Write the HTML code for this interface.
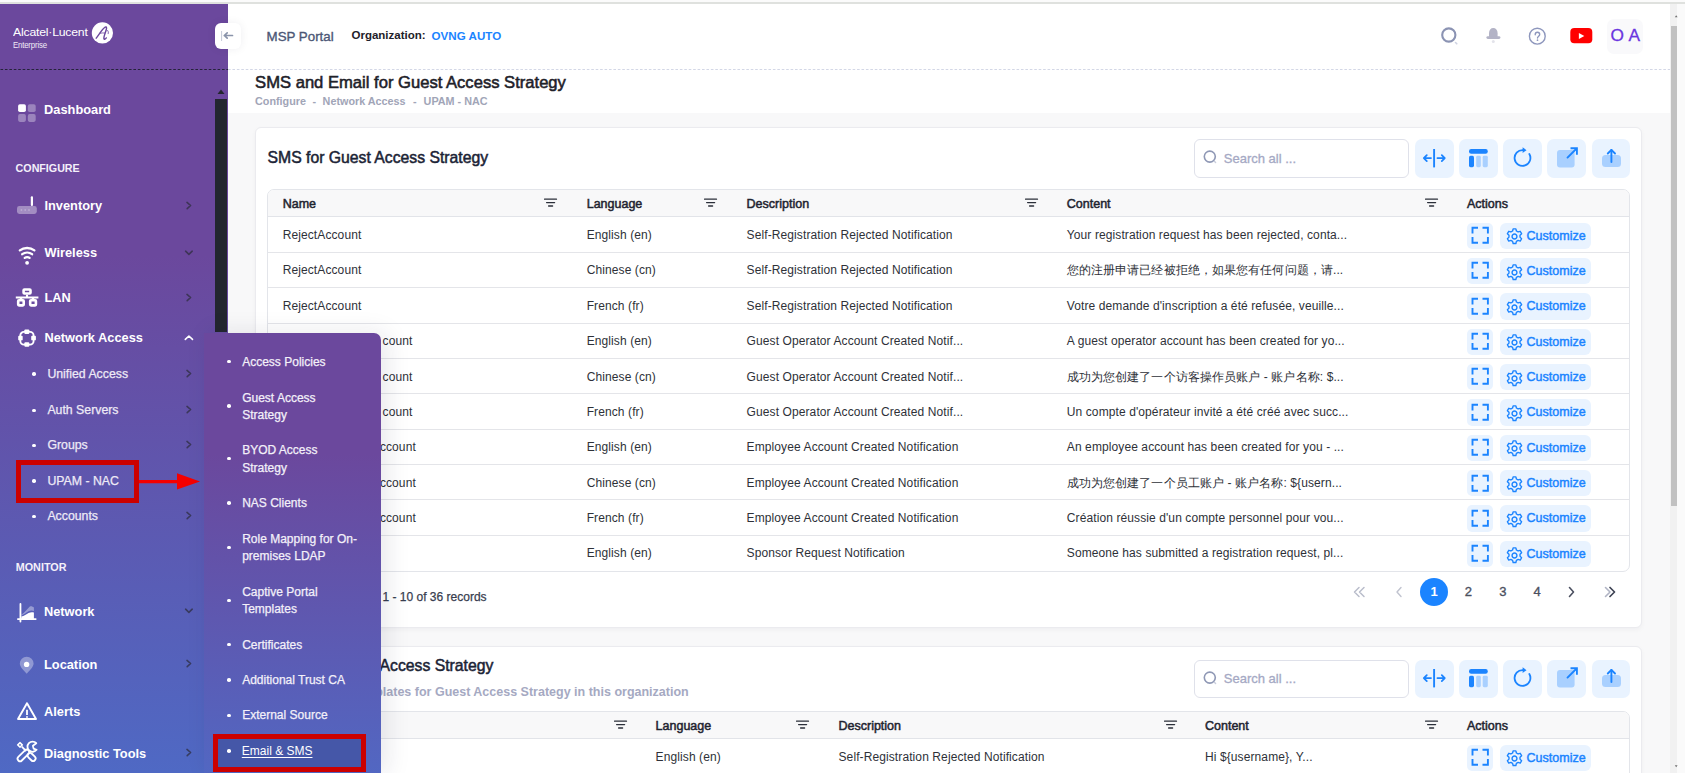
<!DOCTYPE html>
<html><head><meta charset="utf-8"><title>SMS and Email for Guest Access Strategy</title>
<style>
html,body{margin:0;padding:0;width:1685px;height:773px;overflow:hidden;background:#fafafa}
body{position:relative;font-family:"Liberation Sans", sans-serif}
.t{position:absolute;white-space:nowrap;line-height:1;font-family:"Liberation Sans", sans-serif}
.r{position:absolute;display:block}
</style></head><body>
<div class="r" style="left:0.0px;top:0.0px;width:1685.0px;height:773.0px;background:#fafafa"></div>
<div class="r" style="left:228.0px;top:3.0px;width:1442.0px;height:770.0px;background:#ffffff"></div>
<div class="r" style="left:228.0px;top:112.7px;width:1442.0px;height:660.3px;background:#f8f8f9"></div>
<svg class="r" style="left:228px;top:69px;" width="1442" height="1" viewBox="0 0 1442 1"><path d="M0 0.5H1442" stroke="#d3d7e6" stroke-width="1" stroke-dasharray="2.6 1.83"/></svg>
<div class="r" style="left:215.0px;top:23.0px;width:26.0px;height:26.0px;background:#fff;border-radius:6px;box-shadow:0 0 10px rgba(20,20,60,0.07);z-index:3"></div>
<svg class="r" style="left:215px;top:23px;z-index:4" width="26" height="26" viewBox="0 0 26 26"><path d="M6.6 8v10" stroke="#c5cad8" stroke-width="1"/><path d="M9.3 12.5h8.2M9.3 12.5l2.9-2.7M9.3 12.5l2.9 2.7" stroke="#8a94aa" stroke-width="1.7" fill="none" stroke-linecap="round" stroke-linejoin="round"/></svg>
<div class="t" style="left:266.6px;top:29.7px;font-size:13.3px;color:#4b5675;font-weight:400;-webkit-text-stroke:0.35px #4b5675">MSP Portal</div>
<div class="t" style="left:351.5px;top:30.1px;font-size:11.5px;color:#1e2129;font-weight:700;">Organization:</div>
<div class="t" style="left:431.6px;top:29.7px;font-size:11.6px;color:#1b84ff;font-weight:700;">OVNG AUTO</div>
<svg class="r" style="left:1438px;top:24px;" width="24" height="24" viewBox="0 0 24 24"><circle cx="10.8" cy="11" r="6.6" stroke="#8b93b3" stroke-width="2.1" fill="none"/><path d="M17.5 18.5l1.3 1.3" stroke="#cfd3e2" stroke-width="1.6" stroke-linecap="round"/></svg>
<svg class="r" style="left:1484px;top:24px;" width="20" height="22" viewBox="0 0 20 22"><path d="M5 14.9V9.2C5 6 6.8 4 9.3 4S13.6 6 13.6 9.2v5.7z" fill="#b3b3c6"/><rect x="2.4" y="12.2" width="14" height="2.8" rx="1.4" fill="#b3b3c6"/><circle cx="9.3" cy="17.5" r="1.5" fill="#e3e3ea"/></svg>
<svg class="r" style="left:1526px;top:25px;" width="23" height="23" viewBox="0 0 23 23"><circle cx="11.3" cy="11.2" r="7.9" stroke="#8e97bd" stroke-width="1.4" fill="none"/><path d="M9.2 9.7c0-1.4 1-2.4 2.2-2.4s2.3 0.9 2.3 2.2c0 1.7-2.2 1.7-2.2 3.5" stroke="#8e97bd" stroke-width="1.35" fill="none" stroke-linecap="round"/><circle cx="11.5" cy="15.2" r="0.85" fill="#8e97bd"/></svg>
<svg class="r" style="left:1570px;top:28px;" width="23" height="16" viewBox="0 0 23 16"><rect x="0.3" y="0" width="22" height="15.2" rx="4" fill="#ff0000"/><path d="M8.9 5v5.9l5.4-2.95z" fill="#fff"/></svg>
<div class="r" style="left:1607.0px;top:18.5px;width:36.0px;height:35.5px;background:#f9f9fb;border-radius:7px"></div>
<div class="t" style="left:1610.6px;top:26.5px;font-size:17.3px;color:#6a35e0;font-weight:400;letter-spacing:0.3px;-webkit-text-stroke:0.3px #6a35e0">O A</div>
<div class="r" style="left:1670.0px;top:3.0px;width:7.0px;height:770.0px;background:#f1f1f1"></div>
<div class="r" style="left:1671.0px;top:26.0px;width:6.0px;height:480.0px;background:#c1c1c1"></div>
<svg class="r" style="left:1674px;top:14px;" width="4" height="4" viewBox="0 0 4 4"><path d="M2.2 1.2L3.6 3.2H0.8z" fill="#707070"/></svg>
<svg class="r" style="left:1674px;top:764px;" width="4" height="4" viewBox="0 0 4 4"><path d="M2.2 3.2L3.6 1.2H0.8z" fill="#707070"/></svg>
<div class="r" style="left:0.0px;top:0.0px;width:1685.0px;height:2.0px;background:#fbfbfb"></div>
<div class="r" style="left:0.0px;top:2.0px;width:1685.0px;height:1.5px;background:#dfe1de"></div>
<div class="t" style="left:255.1px;top:74.8px;font-size:16.6px;color:#1e2129;font-weight:400;-webkit-text-stroke:0.55px #1e2129">SMS and Email for Guest Access Strategy</div>
<div class="t" style="left:255.0px;top:96.3px;font-size:10.8px;color:#a1a5b7;font-weight:700;">Configure</div>
<div class="t" style="left:312.5px;top:96.3px;font-size:10.8px;color:#a1a5b7;font-weight:700;">-</div>
<div class="t" style="left:322.6px;top:96.3px;font-size:10.8px;color:#a1a5b7;font-weight:700;">Network Access</div>
<div class="t" style="left:413.0px;top:96.3px;font-size:10.8px;color:#a1a5b7;font-weight:700;">-</div>
<div class="t" style="left:423.6px;top:96.3px;font-size:10.8px;color:#a1a5b7;font-weight:700;">UPAM - NAC</div>
<div class="r" style="left:255.3px;top:126.5px;width:1386.9px;height:501.8px;background:#fff;border:1px solid #ebebef;border-radius:6px;box-sizing:border-box;box-shadow:0 2px 5px rgba(30,30,60,0.04)"></div>
<div class="t" style="left:267.5px;top:149.5px;font-size:15.75px;color:#1b2335;font-weight:400;-webkit-text-stroke:0.5px #1b2335">SMS for Guest Access Strategy</div>
<div class="r" style="left:1194.3px;top:139.3px;width:215.0px;height:38.3px;background:#fff;border:1.2px solid #dfe1ea;border-radius:6px;box-sizing:border-box"></div>
<svg class="r" style="left:1201px;top:149.3px;" width="20" height="20" viewBox="0 0 20 20"><circle cx="8.8" cy="7.6" r="5.5" stroke="#8f98b5" stroke-width="1.6" fill="none"/><path d="M13.6 12.6l1 1" stroke="#c9cddc" stroke-width="1.4" stroke-linecap="round"/></svg>
<div class="t" style="left:1223.8px;top:151.8px;font-size:13px;color:#a5a9c4;font-weight:400;-webkit-text-stroke:0.3px #a5a9c4">Search all ...</div>
<div class="r" style="left:1415.0px;top:139.3px;width:38.6px;height:38.3px;background:#e9f3ff;border-radius:7px"></div>
<div class="r" style="left:1459.2px;top:139.3px;width:38.6px;height:38.3px;background:#e9f3ff;border-radius:7px"></div>
<div class="r" style="left:1503.3px;top:139.3px;width:38.6px;height:38.3px;background:#e9f3ff;border-radius:7px"></div>
<div class="r" style="left:1547.4px;top:139.3px;width:38.6px;height:38.3px;background:#e9f3ff;border-radius:7px"></div>
<div class="r" style="left:1591.6px;top:139.3px;width:38.6px;height:38.3px;background:#e9f3ff;border-radius:7px"></div>
<svg class="r" style="left:1415px;top:139px;" width="39" height="39" viewBox="0 0 39 39"><path d="M19.1 10v18.4" stroke="#1b84ff" stroke-width="1.9"/><path d="M8.8 19.1h7.2M8.8 19.1l3-3M8.8 19.1l3 3M22.4 19.1h7.4M29.8 19.1l-3-3M29.8 19.1l-3 3" stroke="#1b84ff" stroke-width="1.75" fill="none" stroke-linecap="round" stroke-linejoin="round"/></svg>
<svg class="r" style="left:1459px;top:139px;" width="39" height="39" viewBox="0 0 39 39"><rect x="10" y="10" width="18.8" height="4.7" rx="2.2" fill="#1b84ff"/><rect x="10" y="16.8" width="5" height="11.4" rx="1.6" fill="#1b84ff"/><rect x="17.2" y="16.8" width="4.6" height="11.4" rx="1.4" fill="#a9d0ff"/><rect x="23.7" y="16.8" width="5.1" height="11.4" rx="1.4" fill="#a9d0ff"/></svg>
<svg class="r" style="left:1503px;top:139px;" width="39" height="39" viewBox="0 0 39 39"><path d="M26.34 15.05A7.9 7.9 0 1 1 19.9 11.1" stroke="#1b84ff" stroke-width="1.8" fill="none" stroke-linecap="round"/><path d="M19.6 8.3l3.9 2.9-3.9 2.9z" fill="#1b84ff"/></svg>
<svg class="r" style="left:1547px;top:139px;" width="39" height="39" viewBox="0 0 39 39"><rect x="10" y="11" width="17.6" height="17.6" rx="3" fill="#a9d0ff"/><path d="M20.5 18.6l8.6-8.6" stroke="#1b84ff" stroke-width="1.9" stroke-linecap="round"/><path d="M23.5 9.3h6.4v6.4" stroke="#1b84ff" stroke-width="1.9" fill="none"/></svg>
<svg class="r" style="left:1591px;top:139px;" width="40" height="39" viewBox="0 0 40 39"><rect x="11" y="16" width="19" height="12" rx="3.5" fill="#a9d0ff"/><path d="M20.4 23V11" stroke="#1b84ff" stroke-width="1.9" stroke-linecap="round"/><path d="M16.8 14.5l3.6-3.6 3.6 3.6" stroke="#1b84ff" stroke-width="1.9" fill="none" stroke-linecap="round" stroke-linejoin="round"/></svg>
<div class="r" style="left:267.4px;top:189.3px;width:1362.6px;height:382.6px;background:#fff;border:1px solid #e3e5ea;border-radius:7px;box-sizing:border-box;overflow:hidden"></div>
<div class="r" style="left:268.4px;top:190.3px;width:1360.6px;height:26.7px;background:#f8f8f9;border-radius:6px 6px 0 0"></div>
<div class="r" style="left:267.4px;top:216.0px;width:1362.6px;height:1.0px;background:#e2e4e9"></div>
<div class="t" style="left:282.7px;top:197.6px;font-size:12.5px;color:#1f2430;font-weight:400;-webkit-text-stroke:0.5px #1f2430">Name</div>
<svg class="r" style="left:544px;top:198px;" width="14" height="10" viewBox="0 0 14 10"><path d="M0.5 1.2h12M2.6 4.6h8M4.6 8h4" stroke="#2b2f3a" stroke-width="1.3" stroke-linecap="round"/></svg>
<div class="t" style="left:586.7px;top:197.6px;font-size:12.5px;color:#1f2430;font-weight:400;-webkit-text-stroke:0.5px #1f2430">Language</div>
<svg class="r" style="left:704px;top:198px;" width="14" height="10" viewBox="0 0 14 10"><path d="M0.5 1.2h12M2.6 4.6h8M4.6 8h4" stroke="#2b2f3a" stroke-width="1.3" stroke-linecap="round"/></svg>
<div class="t" style="left:746.6px;top:197.6px;font-size:12.5px;color:#1f2430;font-weight:400;-webkit-text-stroke:0.5px #1f2430">Description</div>
<svg class="r" style="left:1025px;top:198px;" width="14" height="10" viewBox="0 0 14 10"><path d="M0.5 1.2h12M2.6 4.6h8M4.6 8h4" stroke="#2b2f3a" stroke-width="1.3" stroke-linecap="round"/></svg>
<div class="t" style="left:1066.8px;top:197.6px;font-size:12.5px;color:#1f2430;font-weight:400;-webkit-text-stroke:0.5px #1f2430">Content</div>
<svg class="r" style="left:1425px;top:198px;" width="14" height="10" viewBox="0 0 14 10"><path d="M0.5 1.2h12M2.6 4.6h8M4.6 8h4" stroke="#2b2f3a" stroke-width="1.3" stroke-linecap="round"/></svg>
<div class="t" style="left:1467.0px;top:197.6px;font-size:12.5px;color:#1f2430;font-weight:400;-webkit-text-stroke:0.5px #1f2430">Actions</div>
<div class="t" style="left:282.7px;top:229.1px;font-size:12px;color:#2e3138;font-weight:400;letter-spacing:0.1px">RejectAccount</div>
<div class="t" style="left:586.7px;top:229.1px;font-size:12px;color:#2e3138;font-weight:400;letter-spacing:0.1px">English (en)</div>
<div class="t" style="left:746.6px;top:229.1px;font-size:12px;color:#2e3138;font-weight:400;letter-spacing:0.1px">Self-Registration Rejected Notification</div>
<div class="t" style="left:1066.8px;top:229.1px;font-size:12px;color:#2e3138;font-weight:400;letter-spacing:0.1px">Your registration request has been rejected, conta...</div>
<div class="r" style="left:1467.0px;top:222.6px;width:26.2px;height:26.3px;background:#e9f3ff;border-radius:5px"></div>
<svg class="r" style="left:1467px;top:222px;" width="27" height="27" viewBox="0 0 27 27"><path d="M5.5 11.6V5.8H11M15.5 5.8H20.9V11.6M20.9 15.1V20.7H15.5M11 20.7H5.5V15.1" stroke="#1b84ff" stroke-width="1.9" fill="none"/></svg>
<div class="r" style="left:1500.0px;top:222.6px;width:91.3px;height:26.3px;background:#e9f3ff;border-radius:6px"></div>
<svg class="r" style="left:1505.5px;top:228.37500000000003px;" width="17" height="17" viewBox="0 0 17 17"><g transform="translate(8.5,8.5) scale(1.06)"><path d="M-1.3-7.2h2.6l.5 2 1.6.9 2-.6 1.3 2.2-1.5 1.5v1.8l1.5 1.5-1.3 2.2-2-.6-1.6.9-.5 2h-2.6l-.5-2-1.6-.9-2 .6-1.3-2.2 1.5-1.5v-1.8l-1.5-1.5 1.3-2.2 2 .6 1.6-.9z" stroke="#1b84ff" stroke-width="1.3" fill="none" stroke-linejoin="round"/><circle r="2.3" stroke="#1b84ff" stroke-width="1.3" fill="none"/></g></svg>
<div class="t" style="left:1526.6px;top:229.6px;font-size:12.5px;color:#1b84ff;font-weight:400;-webkit-text-stroke:0.45px #1b84ff">Customize</div>
<div class="r" style="left:268.4px;top:252.0px;width:1360.6px;height:1.0px;background:#e4e5e9"></div>
<div class="t" style="left:282.7px;top:264.4px;font-size:12px;color:#2e3138;font-weight:400;letter-spacing:0.1px">RejectAccount</div>
<div class="t" style="left:586.7px;top:264.4px;font-size:12px;color:#2e3138;font-weight:400;letter-spacing:0.1px">Chinese (cn)</div>
<div class="t" style="left:746.6px;top:264.4px;font-size:12px;color:#2e3138;font-weight:400;letter-spacing:0.1px">Self-Registration Rejected Notification</div>
<div class="t" style="left:1066.8px;top:264.4px;font-size:12px;color:#2e3138;font-weight:400;letter-spacing:0.1px">您的注册申请已经被拒绝，如果您有任何问题，请...</div>
<div class="r" style="left:1467.0px;top:257.9px;width:26.2px;height:26.3px;background:#e9f3ff;border-radius:5px"></div>
<svg class="r" style="left:1467px;top:257px;" width="27" height="27" viewBox="0 0 27 27"><path d="M5.5 11.6V5.8H11M15.5 5.8H20.9V11.6M20.9 15.1V20.7H15.5M11 20.7H5.5V15.1" stroke="#1b84ff" stroke-width="1.9" fill="none"/></svg>
<div class="r" style="left:1500.0px;top:257.9px;width:91.3px;height:26.3px;background:#e9f3ff;border-radius:6px"></div>
<svg class="r" style="left:1505.5px;top:263.72499999999997px;" width="17" height="17" viewBox="0 0 17 17"><g transform="translate(8.5,8.5) scale(1.06)"><path d="M-1.3-7.2h2.6l.5 2 1.6.9 2-.6 1.3 2.2-1.5 1.5v1.8l1.5 1.5-1.3 2.2-2-.6-1.6.9-.5 2h-2.6l-.5-2-1.6-.9-2 .6-1.3-2.2 1.5-1.5v-1.8l-1.5-1.5 1.3-2.2 2 .6 1.6-.9z" stroke="#1b84ff" stroke-width="1.3" fill="none" stroke-linejoin="round"/><circle r="2.3" stroke="#1b84ff" stroke-width="1.3" fill="none"/></g></svg>
<div class="t" style="left:1526.6px;top:264.9px;font-size:12.5px;color:#1b84ff;font-weight:400;-webkit-text-stroke:0.45px #1b84ff">Customize</div>
<div class="r" style="left:268.4px;top:287.0px;width:1360.6px;height:1.0px;background:#e4e5e9"></div>
<div class="t" style="left:282.7px;top:299.8px;font-size:12px;color:#2e3138;font-weight:400;letter-spacing:0.1px">RejectAccount</div>
<div class="t" style="left:586.7px;top:299.8px;font-size:12px;color:#2e3138;font-weight:400;letter-spacing:0.1px">French (fr)</div>
<div class="t" style="left:746.6px;top:299.8px;font-size:12px;color:#2e3138;font-weight:400;letter-spacing:0.1px">Self-Registration Rejected Notification</div>
<div class="t" style="left:1066.8px;top:299.8px;font-size:12px;color:#2e3138;font-weight:400;letter-spacing:0.1px">Votre demande d&#x27;inscription a été refusée, veuille...</div>
<div class="r" style="left:1467.0px;top:293.3px;width:26.2px;height:26.3px;background:#e9f3ff;border-radius:5px"></div>
<svg class="r" style="left:1467px;top:293px;" width="27" height="27" viewBox="0 0 27 27"><path d="M5.5 11.6V5.8H11M15.5 5.8H20.9V11.6M20.9 15.1V20.7H15.5M11 20.7H5.5V15.1" stroke="#1b84ff" stroke-width="1.9" fill="none"/></svg>
<div class="r" style="left:1500.0px;top:293.3px;width:91.3px;height:26.3px;background:#e9f3ff;border-radius:6px"></div>
<svg class="r" style="left:1505.5px;top:299.075px;" width="17" height="17" viewBox="0 0 17 17"><g transform="translate(8.5,8.5) scale(1.06)"><path d="M-1.3-7.2h2.6l.5 2 1.6.9 2-.6 1.3 2.2-1.5 1.5v1.8l1.5 1.5-1.3 2.2-2-.6-1.6.9-.5 2h-2.6l-.5-2-1.6-.9-2 .6-1.3-2.2 1.5-1.5v-1.8l-1.5-1.5 1.3-2.2 2 .6 1.6-.9z" stroke="#1b84ff" stroke-width="1.3" fill="none" stroke-linejoin="round"/><circle r="2.3" stroke="#1b84ff" stroke-width="1.3" fill="none"/></g></svg>
<div class="t" style="left:1526.6px;top:300.2px;font-size:12.5px;color:#1b84ff;font-weight:400;-webkit-text-stroke:0.45px #1b84ff">Customize</div>
<div class="r" style="left:268.4px;top:323.0px;width:1360.6px;height:1.0px;background:#e4e5e9"></div>
<div class="t" style="left:382.6px;top:335.2px;font-size:12px;color:#2e3138;font-weight:400;letter-spacing:0.1px">count</div>
<div class="t" style="left:586.7px;top:335.2px;font-size:12px;color:#2e3138;font-weight:400;letter-spacing:0.1px">English (en)</div>
<div class="t" style="left:746.6px;top:335.2px;font-size:12px;color:#2e3138;font-weight:400;letter-spacing:0.1px">Guest Operator Account Created Notif...</div>
<div class="t" style="left:1066.8px;top:335.2px;font-size:12px;color:#2e3138;font-weight:400;letter-spacing:0.1px">A guest operator account has been created for yo...</div>
<div class="r" style="left:1467.0px;top:328.6px;width:26.2px;height:26.3px;background:#e9f3ff;border-radius:5px"></div>
<svg class="r" style="left:1467px;top:328px;" width="27" height="27" viewBox="0 0 27 27"><path d="M5.5 11.6V5.8H11M15.5 5.8H20.9V11.6M20.9 15.1V20.7H15.5M11 20.7H5.5V15.1" stroke="#1b84ff" stroke-width="1.9" fill="none"/></svg>
<div class="r" style="left:1500.0px;top:328.6px;width:91.3px;height:26.3px;background:#e9f3ff;border-radius:6px"></div>
<svg class="r" style="left:1505.5px;top:334.425px;" width="17" height="17" viewBox="0 0 17 17"><g transform="translate(8.5,8.5) scale(1.06)"><path d="M-1.3-7.2h2.6l.5 2 1.6.9 2-.6 1.3 2.2-1.5 1.5v1.8l1.5 1.5-1.3 2.2-2-.6-1.6.9-.5 2h-2.6l-.5-2-1.6-.9-2 .6-1.3-2.2 1.5-1.5v-1.8l-1.5-1.5 1.3-2.2 2 .6 1.6-.9z" stroke="#1b84ff" stroke-width="1.3" fill="none" stroke-linejoin="round"/><circle r="2.3" stroke="#1b84ff" stroke-width="1.3" fill="none"/></g></svg>
<div class="t" style="left:1526.6px;top:335.6px;font-size:12.5px;color:#1b84ff;font-weight:400;-webkit-text-stroke:0.45px #1b84ff">Customize</div>
<div class="r" style="left:268.4px;top:358.0px;width:1360.6px;height:1.0px;background:#e4e5e9"></div>
<div class="t" style="left:382.6px;top:370.5px;font-size:12px;color:#2e3138;font-weight:400;letter-spacing:0.1px">count</div>
<div class="t" style="left:586.7px;top:370.5px;font-size:12px;color:#2e3138;font-weight:400;letter-spacing:0.1px">Chinese (cn)</div>
<div class="t" style="left:746.6px;top:370.5px;font-size:12px;color:#2e3138;font-weight:400;letter-spacing:0.1px">Guest Operator Account Created Notif...</div>
<div class="t" style="left:1066.8px;top:370.5px;font-size:12px;color:#2e3138;font-weight:400;letter-spacing:0.1px">成功为您创建了一个访客操作员账户 - 账户名称: $...</div>
<div class="r" style="left:1467.0px;top:364.0px;width:26.2px;height:26.3px;background:#e9f3ff;border-radius:5px"></div>
<svg class="r" style="left:1467px;top:363px;" width="27" height="27" viewBox="0 0 27 27"><path d="M5.5 11.6V5.8H11M15.5 5.8H20.9V11.6M20.9 15.1V20.7H15.5M11 20.7H5.5V15.1" stroke="#1b84ff" stroke-width="1.9" fill="none"/></svg>
<div class="r" style="left:1500.0px;top:364.0px;width:91.3px;height:26.3px;background:#e9f3ff;border-radius:6px"></div>
<svg class="r" style="left:1505.5px;top:369.775px;" width="17" height="17" viewBox="0 0 17 17"><g transform="translate(8.5,8.5) scale(1.06)"><path d="M-1.3-7.2h2.6l.5 2 1.6.9 2-.6 1.3 2.2-1.5 1.5v1.8l1.5 1.5-1.3 2.2-2-.6-1.6.9-.5 2h-2.6l-.5-2-1.6-.9-2 .6-1.3-2.2 1.5-1.5v-1.8l-1.5-1.5 1.3-2.2 2 .6 1.6-.9z" stroke="#1b84ff" stroke-width="1.3" fill="none" stroke-linejoin="round"/><circle r="2.3" stroke="#1b84ff" stroke-width="1.3" fill="none"/></g></svg>
<div class="t" style="left:1526.6px;top:370.9px;font-size:12.5px;color:#1b84ff;font-weight:400;-webkit-text-stroke:0.45px #1b84ff">Customize</div>
<div class="r" style="left:268.4px;top:393.0px;width:1360.6px;height:1.0px;background:#e4e5e9"></div>
<div class="t" style="left:382.6px;top:405.9px;font-size:12px;color:#2e3138;font-weight:400;letter-spacing:0.1px">count</div>
<div class="t" style="left:586.7px;top:405.9px;font-size:12px;color:#2e3138;font-weight:400;letter-spacing:0.1px">French (fr)</div>
<div class="t" style="left:746.6px;top:405.9px;font-size:12px;color:#2e3138;font-weight:400;letter-spacing:0.1px">Guest Operator Account Created Notif...</div>
<div class="t" style="left:1066.8px;top:405.9px;font-size:12px;color:#2e3138;font-weight:400;letter-spacing:0.1px">Un compte d&#x27;opérateur invité a été créé avec succ...</div>
<div class="r" style="left:1467.0px;top:399.3px;width:26.2px;height:26.3px;background:#e9f3ff;border-radius:5px"></div>
<svg class="r" style="left:1467px;top:399px;" width="27" height="27" viewBox="0 0 27 27"><path d="M5.5 11.6V5.8H11M15.5 5.8H20.9V11.6M20.9 15.1V20.7H15.5M11 20.7H5.5V15.1" stroke="#1b84ff" stroke-width="1.9" fill="none"/></svg>
<div class="r" style="left:1500.0px;top:399.3px;width:91.3px;height:26.3px;background:#e9f3ff;border-radius:6px"></div>
<svg class="r" style="left:1505.5px;top:405.125px;" width="17" height="17" viewBox="0 0 17 17"><g transform="translate(8.5,8.5) scale(1.06)"><path d="M-1.3-7.2h2.6l.5 2 1.6.9 2-.6 1.3 2.2-1.5 1.5v1.8l1.5 1.5-1.3 2.2-2-.6-1.6.9-.5 2h-2.6l-.5-2-1.6-.9-2 .6-1.3-2.2 1.5-1.5v-1.8l-1.5-1.5 1.3-2.2 2 .6 1.6-.9z" stroke="#1b84ff" stroke-width="1.3" fill="none" stroke-linejoin="round"/><circle r="2.3" stroke="#1b84ff" stroke-width="1.3" fill="none"/></g></svg>
<div class="t" style="left:1526.6px;top:406.3px;font-size:12.5px;color:#1b84ff;font-weight:400;-webkit-text-stroke:0.45px #1b84ff">Customize</div>
<div class="r" style="left:268.4px;top:429.0px;width:1360.6px;height:1.0px;background:#e4e5e9"></div>
<div class="t" style="left:379.9px;top:441.2px;font-size:12px;color:#2e3138;font-weight:400;letter-spacing:0.1px">ccount</div>
<div class="t" style="left:586.7px;top:441.2px;font-size:12px;color:#2e3138;font-weight:400;letter-spacing:0.1px">English (en)</div>
<div class="t" style="left:746.6px;top:441.2px;font-size:12px;color:#2e3138;font-weight:400;letter-spacing:0.1px">Employee Account Created Notification</div>
<div class="t" style="left:1066.8px;top:441.2px;font-size:12px;color:#2e3138;font-weight:400;letter-spacing:0.1px">An employee account has been created for you - ...</div>
<div class="r" style="left:1467.0px;top:434.7px;width:26.2px;height:26.3px;background:#e9f3ff;border-radius:5px"></div>
<svg class="r" style="left:1467px;top:434px;" width="27" height="27" viewBox="0 0 27 27"><path d="M5.5 11.6V5.8H11M15.5 5.8H20.9V11.6M20.9 15.1V20.7H15.5M11 20.7H5.5V15.1" stroke="#1b84ff" stroke-width="1.9" fill="none"/></svg>
<div class="r" style="left:1500.0px;top:434.7px;width:91.3px;height:26.3px;background:#e9f3ff;border-radius:6px"></div>
<svg class="r" style="left:1505.5px;top:440.475px;" width="17" height="17" viewBox="0 0 17 17"><g transform="translate(8.5,8.5) scale(1.06)"><path d="M-1.3-7.2h2.6l.5 2 1.6.9 2-.6 1.3 2.2-1.5 1.5v1.8l1.5 1.5-1.3 2.2-2-.6-1.6.9-.5 2h-2.6l-.5-2-1.6-.9-2 .6-1.3-2.2 1.5-1.5v-1.8l-1.5-1.5 1.3-2.2 2 .6 1.6-.9z" stroke="#1b84ff" stroke-width="1.3" fill="none" stroke-linejoin="round"/><circle r="2.3" stroke="#1b84ff" stroke-width="1.3" fill="none"/></g></svg>
<div class="t" style="left:1526.6px;top:441.7px;font-size:12.5px;color:#1b84ff;font-weight:400;-webkit-text-stroke:0.45px #1b84ff">Customize</div>
<div class="r" style="left:268.4px;top:464.0px;width:1360.6px;height:1.0px;background:#e4e5e9"></div>
<div class="t" style="left:379.9px;top:476.6px;font-size:12px;color:#2e3138;font-weight:400;letter-spacing:0.1px">ccount</div>
<div class="t" style="left:586.7px;top:476.6px;font-size:12px;color:#2e3138;font-weight:400;letter-spacing:0.1px">Chinese (cn)</div>
<div class="t" style="left:746.6px;top:476.6px;font-size:12px;color:#2e3138;font-weight:400;letter-spacing:0.1px">Employee Account Created Notification</div>
<div class="t" style="left:1066.8px;top:476.6px;font-size:12px;color:#2e3138;font-weight:400;letter-spacing:0.1px">成功为您创建了一个员工账户 - 账户名称: ${usern...</div>
<div class="r" style="left:1467.0px;top:470.0px;width:26.2px;height:26.3px;background:#e9f3ff;border-radius:5px"></div>
<svg class="r" style="left:1467px;top:470px;" width="27" height="27" viewBox="0 0 27 27"><path d="M5.5 11.6V5.8H11M15.5 5.8H20.9V11.6M20.9 15.1V20.7H15.5M11 20.7H5.5V15.1" stroke="#1b84ff" stroke-width="1.9" fill="none"/></svg>
<div class="r" style="left:1500.0px;top:470.0px;width:91.3px;height:26.3px;background:#e9f3ff;border-radius:6px"></div>
<svg class="r" style="left:1505.5px;top:475.82500000000005px;" width="17" height="17" viewBox="0 0 17 17"><g transform="translate(8.5,8.5) scale(1.06)"><path d="M-1.3-7.2h2.6l.5 2 1.6.9 2-.6 1.3 2.2-1.5 1.5v1.8l1.5 1.5-1.3 2.2-2-.6-1.6.9-.5 2h-2.6l-.5-2-1.6-.9-2 .6-1.3-2.2 1.5-1.5v-1.8l-1.5-1.5 1.3-2.2 2 .6 1.6-.9z" stroke="#1b84ff" stroke-width="1.3" fill="none" stroke-linejoin="round"/><circle r="2.3" stroke="#1b84ff" stroke-width="1.3" fill="none"/></g></svg>
<div class="t" style="left:1526.6px;top:477.0px;font-size:12.5px;color:#1b84ff;font-weight:400;-webkit-text-stroke:0.45px #1b84ff">Customize</div>
<div class="r" style="left:268.4px;top:499.0px;width:1360.6px;height:1.0px;background:#e4e5e9"></div>
<div class="t" style="left:379.9px;top:511.9px;font-size:12px;color:#2e3138;font-weight:400;letter-spacing:0.1px">ccount</div>
<div class="t" style="left:586.7px;top:511.9px;font-size:12px;color:#2e3138;font-weight:400;letter-spacing:0.1px">French (fr)</div>
<div class="t" style="left:746.6px;top:511.9px;font-size:12px;color:#2e3138;font-weight:400;letter-spacing:0.1px">Employee Account Created Notification</div>
<div class="t" style="left:1066.8px;top:511.9px;font-size:12px;color:#2e3138;font-weight:400;letter-spacing:0.1px">Création réussie d&#x27;un compte personnel pour vou...</div>
<div class="r" style="left:1467.0px;top:505.4px;width:26.2px;height:26.3px;background:#e9f3ff;border-radius:5px"></div>
<svg class="r" style="left:1467px;top:505px;" width="27" height="27" viewBox="0 0 27 27"><path d="M5.5 11.6V5.8H11M15.5 5.8H20.9V11.6M20.9 15.1V20.7H15.5M11 20.7H5.5V15.1" stroke="#1b84ff" stroke-width="1.9" fill="none"/></svg>
<div class="r" style="left:1500.0px;top:505.4px;width:91.3px;height:26.3px;background:#e9f3ff;border-radius:6px"></div>
<svg class="r" style="left:1505.5px;top:511.175px;" width="17" height="17" viewBox="0 0 17 17"><g transform="translate(8.5,8.5) scale(1.06)"><path d="M-1.3-7.2h2.6l.5 2 1.6.9 2-.6 1.3 2.2-1.5 1.5v1.8l1.5 1.5-1.3 2.2-2-.6-1.6.9-.5 2h-2.6l-.5-2-1.6-.9-2 .6-1.3-2.2 1.5-1.5v-1.8l-1.5-1.5 1.3-2.2 2 .6 1.6-.9z" stroke="#1b84ff" stroke-width="1.3" fill="none" stroke-linejoin="round"/><circle r="2.3" stroke="#1b84ff" stroke-width="1.3" fill="none"/></g></svg>
<div class="t" style="left:1526.6px;top:512.4px;font-size:12.5px;color:#1b84ff;font-weight:400;-webkit-text-stroke:0.45px #1b84ff">Customize</div>
<div class="r" style="left:268.4px;top:535.0px;width:1360.6px;height:1.0px;background:#e4e5e9"></div>
<div class="t" style="left:282.7px;top:547.2px;font-size:12px;color:#2e3138;font-weight:400;letter-spacing:0.1px">SponsorRequest</div>
<div class="t" style="left:586.7px;top:547.2px;font-size:12px;color:#2e3138;font-weight:400;letter-spacing:0.1px">English (en)</div>
<div class="t" style="left:746.6px;top:547.2px;font-size:12px;color:#2e3138;font-weight:400;letter-spacing:0.1px">Sponsor Request Notification</div>
<div class="t" style="left:1066.8px;top:547.2px;font-size:12px;color:#2e3138;font-weight:400;letter-spacing:0.1px">Someone has submitted a registration request, pl...</div>
<div class="r" style="left:1467.0px;top:540.7px;width:26.2px;height:26.3px;background:#e9f3ff;border-radius:5px"></div>
<svg class="r" style="left:1467px;top:540px;" width="27" height="27" viewBox="0 0 27 27"><path d="M5.5 11.6V5.8H11M15.5 5.8H20.9V11.6M20.9 15.1V20.7H15.5M11 20.7H5.5V15.1" stroke="#1b84ff" stroke-width="1.9" fill="none"/></svg>
<div class="r" style="left:1500.0px;top:540.7px;width:91.3px;height:26.3px;background:#e9f3ff;border-radius:6px"></div>
<svg class="r" style="left:1505.5px;top:546.525px;" width="17" height="17" viewBox="0 0 17 17"><g transform="translate(8.5,8.5) scale(1.06)"><path d="M-1.3-7.2h2.6l.5 2 1.6.9 2-.6 1.3 2.2-1.5 1.5v1.8l1.5 1.5-1.3 2.2-2-.6-1.6.9-.5 2h-2.6l-.5-2-1.6-.9-2 .6-1.3-2.2 1.5-1.5v-1.8l-1.5-1.5 1.3-2.2 2 .6 1.6-.9z" stroke="#1b84ff" stroke-width="1.3" fill="none" stroke-linejoin="round"/><circle r="2.3" stroke="#1b84ff" stroke-width="1.3" fill="none"/></g></svg>
<div class="t" style="left:1526.6px;top:547.7px;font-size:12.5px;color:#1b84ff;font-weight:400;-webkit-text-stroke:0.45px #1b84ff">Customize</div>
<div class="t" style="left:382.5px;top:590.5px;font-size:12px;color:#383d4f;font-weight:400;-webkit-text-stroke:0.25px #383d4f">1 - 10 of 36 records</div>
<div class="r" style="left:1420px;top:578px;width:28.2px;height:28.2px;border-radius:50%;background:#1b84ff"></div>
<div class="t" style="left:1430.4px;top:585.2px;font-size:13px;color:#ffffff;font-weight:700;">1</div>
<div class="t" style="left:1464.8px;top:585.2px;font-size:13px;color:#4b5060;font-weight:400;-webkit-text-stroke:0.35px #4b5060">2</div>
<div class="t" style="left:1499.2px;top:585.2px;font-size:13px;color:#4b5060;font-weight:400;-webkit-text-stroke:0.35px #4b5060">3</div>
<div class="t" style="left:1533.6px;top:585.2px;font-size:13px;color:#4b5060;font-weight:400;-webkit-text-stroke:0.35px #4b5060">4</div>
<svg class="r" style="left:1350px;top:584px;" width="20" height="16" viewBox="0 0 20 16"><path d="M9 3.5L4.5 8 9 12.5M14 3.5L9.5 8 14 12.5" stroke="#b9bdcb" stroke-width="1.5" fill="none" stroke-linecap="round" stroke-linejoin="round"/></svg>
<svg class="r" style="left:1392px;top:584px;" width="14" height="16" viewBox="0 0 14 16"><path d="M9 3.5L5 8 9 12.5" stroke="#c0c3cf" stroke-width="1.4" fill="none" stroke-linecap="round" stroke-linejoin="round"/></svg>
<svg class="r" style="left:1565px;top:584px;" width="14" height="16" viewBox="0 0 14 16"><path d="M4.5 3.5L8.5 8 4.5 12.5" stroke="#4b5060" stroke-width="1.6" fill="none" stroke-linecap="round" stroke-linejoin="round"/></svg>
<svg class="r" style="left:1600px;top:584px;" width="20" height="16" viewBox="0 0 20 16"><path d="M5.5 3.5L10 8 5.5 12.5" stroke="#b0b4c4" stroke-width="1.6" fill="none" stroke-linecap="round" stroke-linejoin="round"/><path d="M10 3.5L14.5 8 10 12.5" stroke="#3e4354" stroke-width="1.7" fill="none" stroke-linecap="round" stroke-linejoin="round"/></svg>
<div class="r" style="left:255.3px;top:646.4px;width:1386.9px;height:153.6px;background:#fff;border:1px solid #ebebef;border-radius:6px;box-sizing:border-box;box-shadow:0 2px 5px rgba(30,30,60,0.04)"></div>
<div class="t" style="left:267.5px;top:658.3px;font-size:15.75px;color:#1b2335;font-weight:400;-webkit-text-stroke:0.5px #1b2335">Email for Guest Access Strategy</div>
<div class="t" style="left:267.5px;top:686.3px;font-size:12.5px;color:#a5a9c2;font-weight:700;">Manage email templates for Guest Access Strategy in this organization</div>
<div class="r" style="left:1194.3px;top:659.6px;width:215.0px;height:38.3px;background:#fff;border:1.2px solid #dfe1ea;border-radius:6px;box-sizing:border-box"></div>
<svg class="r" style="left:1201px;top:669.6px;" width="20" height="20" viewBox="0 0 20 20"><circle cx="8.8" cy="7.6" r="5.5" stroke="#8f98b5" stroke-width="1.6" fill="none"/><path d="M13.6 12.6l1 1" stroke="#c9cddc" stroke-width="1.4" stroke-linecap="round"/></svg>
<div class="t" style="left:1223.8px;top:672.1px;font-size:13px;color:#a5a9c4;font-weight:400;-webkit-text-stroke:0.3px #a5a9c4">Search all ...</div>
<div class="r" style="left:1415.0px;top:659.6px;width:38.6px;height:38.3px;background:#e9f3ff;border-radius:7px"></div>
<div class="r" style="left:1459.2px;top:659.6px;width:38.6px;height:38.3px;background:#e9f3ff;border-radius:7px"></div>
<div class="r" style="left:1503.3px;top:659.6px;width:38.6px;height:38.3px;background:#e9f3ff;border-radius:7px"></div>
<div class="r" style="left:1547.4px;top:659.6px;width:38.6px;height:38.3px;background:#e9f3ff;border-radius:7px"></div>
<div class="r" style="left:1591.6px;top:659.6px;width:38.6px;height:38.3px;background:#e9f3ff;border-radius:7px"></div>
<svg class="r" style="left:1415px;top:659px;" width="39" height="39" viewBox="0 0 39 39"><path d="M19.1 10v18.4" stroke="#1b84ff" stroke-width="1.9"/><path d="M8.8 19.1h7.2M8.8 19.1l3-3M8.8 19.1l3 3M22.4 19.1h7.4M29.8 19.1l-3-3M29.8 19.1l-3 3" stroke="#1b84ff" stroke-width="1.75" fill="none" stroke-linecap="round" stroke-linejoin="round"/></svg>
<svg class="r" style="left:1459px;top:659px;" width="39" height="39" viewBox="0 0 39 39"><rect x="10" y="10" width="18.8" height="4.7" rx="2.2" fill="#1b84ff"/><rect x="10" y="16.8" width="5" height="11.4" rx="1.6" fill="#1b84ff"/><rect x="17.2" y="16.8" width="4.6" height="11.4" rx="1.4" fill="#a9d0ff"/><rect x="23.7" y="16.8" width="5.1" height="11.4" rx="1.4" fill="#a9d0ff"/></svg>
<svg class="r" style="left:1503px;top:659px;" width="39" height="39" viewBox="0 0 39 39"><path d="M26.34 15.05A7.9 7.9 0 1 1 19.9 11.1" stroke="#1b84ff" stroke-width="1.8" fill="none" stroke-linecap="round"/><path d="M19.6 8.3l3.9 2.9-3.9 2.9z" fill="#1b84ff"/></svg>
<svg class="r" style="left:1547px;top:659px;" width="39" height="39" viewBox="0 0 39 39"><rect x="10" y="11" width="17.6" height="17.6" rx="3" fill="#a9d0ff"/><path d="M20.5 18.6l8.6-8.6" stroke="#1b84ff" stroke-width="1.9" stroke-linecap="round"/><path d="M23.5 9.3h6.4v6.4" stroke="#1b84ff" stroke-width="1.9" fill="none"/></svg>
<svg class="r" style="left:1591px;top:659px;" width="40" height="39" viewBox="0 0 40 39"><rect x="11" y="16" width="19" height="12" rx="3.5" fill="#a9d0ff"/><path d="M20.4 23V11" stroke="#1b84ff" stroke-width="1.9" stroke-linecap="round"/><path d="M16.8 14.5l3.6-3.6 3.6 3.6" stroke="#1b84ff" stroke-width="1.9" fill="none" stroke-linecap="round" stroke-linejoin="round"/></svg>
<div class="r" style="left:267.4px;top:711.3px;width:1362.6px;height:108.7px;background:#fff;border:1px solid #e3e5ea;border-radius:7px;box-sizing:border-box;overflow:hidden"></div>
<div class="r" style="left:268.4px;top:712.3px;width:1360.6px;height:26.7px;background:#f8f8f9;border-radius:6px 6px 0 0"></div>
<div class="r" style="left:267.4px;top:738.0px;width:1362.6px;height:1.0px;background:#e2e4e9"></div>
<div class="t" style="left:282.7px;top:719.6px;font-size:12.5px;color:#1f2430;font-weight:400;-webkit-text-stroke:0.5px #1f2430">Name</div>
<svg class="r" style="left:614px;top:720px;" width="14" height="10" viewBox="0 0 14 10"><path d="M0.5 1.2h12M2.6 4.6h8M4.6 8h4" stroke="#2b2f3a" stroke-width="1.3" stroke-linecap="round"/></svg>
<div class="t" style="left:655.6px;top:719.6px;font-size:12.5px;color:#1f2430;font-weight:400;-webkit-text-stroke:0.5px #1f2430">Language</div>
<svg class="r" style="left:796px;top:720px;" width="14" height="10" viewBox="0 0 14 10"><path d="M0.5 1.2h12M2.6 4.6h8M4.6 8h4" stroke="#2b2f3a" stroke-width="1.3" stroke-linecap="round"/></svg>
<div class="t" style="left:838.5px;top:719.6px;font-size:12.5px;color:#1f2430;font-weight:400;-webkit-text-stroke:0.5px #1f2430">Description</div>
<svg class="r" style="left:1164px;top:720px;" width="14" height="10" viewBox="0 0 14 10"><path d="M0.5 1.2h12M2.6 4.6h8M4.6 8h4" stroke="#2b2f3a" stroke-width="1.3" stroke-linecap="round"/></svg>
<div class="t" style="left:1205.0px;top:719.6px;font-size:12.5px;color:#1f2430;font-weight:400;-webkit-text-stroke:0.5px #1f2430">Content</div>
<svg class="r" style="left:1425px;top:720px;" width="14" height="10" viewBox="0 0 14 10"><path d="M0.5 1.2h12M2.6 4.6h8M4.6 8h4" stroke="#2b2f3a" stroke-width="1.3" stroke-linecap="round"/></svg>
<div class="t" style="left:1467.0px;top:719.6px;font-size:12.5px;color:#1f2430;font-weight:400;-webkit-text-stroke:0.5px #1f2430">Actions</div>
<div class="t" style="left:282.7px;top:751.1px;font-size:12px;color:#2e3138;font-weight:400;letter-spacing:0.1px">RejectAccount</div>
<div class="t" style="left:655.6px;top:751.1px;font-size:12px;color:#2e3138;font-weight:400;letter-spacing:0.1px">English (en)</div>
<div class="t" style="left:838.5px;top:751.1px;font-size:12px;color:#2e3138;font-weight:400;letter-spacing:0.1px">Self-Registration Rejected Notification</div>
<div class="t" style="left:1205.0px;top:751.1px;font-size:12px;color:#2e3138;font-weight:400;letter-spacing:0.1px">Hi ${username}, Y...</div>
<div class="r" style="left:1467.0px;top:744.6px;width:26.2px;height:26.3px;background:#e9f3ff;border-radius:5px"></div>
<svg class="r" style="left:1467px;top:744px;" width="27" height="27" viewBox="0 0 27 27"><path d="M5.5 11.6V5.8H11M15.5 5.8H20.9V11.6M20.9 15.1V20.7H15.5M11 20.7H5.5V15.1" stroke="#1b84ff" stroke-width="1.9" fill="none"/></svg>
<div class="r" style="left:1500.0px;top:744.6px;width:91.3px;height:26.3px;background:#e9f3ff;border-radius:6px"></div>
<svg class="r" style="left:1505.5px;top:750.3749999999999px;" width="17" height="17" viewBox="0 0 17 17"><g transform="translate(8.5,8.5) scale(1.06)"><path d="M-1.3-7.2h2.6l.5 2 1.6.9 2-.6 1.3 2.2-1.5 1.5v1.8l1.5 1.5-1.3 2.2-2-.6-1.6.9-.5 2h-2.6l-.5-2-1.6-.9-2 .6-1.3-2.2 1.5-1.5v-1.8l-1.5-1.5 1.3-2.2 2 .6 1.6-.9z" stroke="#1b84ff" stroke-width="1.3" fill="none" stroke-linejoin="round"/><circle r="2.3" stroke="#1b84ff" stroke-width="1.3" fill="none"/></g></svg>
<div class="t" style="left:1526.6px;top:751.5px;font-size:12.5px;color:#1b84ff;font-weight:400;-webkit-text-stroke:0.45px #1b84ff">Customize</div>
<div class="r" style="left:0;top:3.5px;width:228px;height:770px;background:linear-gradient(180deg,#6b489d 0px,#6b489d 251px,#4f69c4 769px)"></div>
<svg class="r" style="left:0px;top:69px;" width="228" height="1" viewBox="0 0 228 1"><path d="M0.5 0.5H228" stroke="#25233a" stroke-width="1" stroke-dasharray="2.6 1.83"/></svg>
<div class="t" style="left:12.8px;top:26.9px;font-size:11.2px;color:#ffffff;font-weight:400;letter-spacing:-0.2px;transform:scaleX(1.096);transform-origin:left">Alcatel·Lucent</div>
<div class="t" style="left:12.8px;top:40.5px;font-size:8.7px;color:#f0eaf7;font-weight:400;letter-spacing:-0.2px;transform:scaleX(0.9);transform-origin:left">Enterprise</div>
<svg class="r" style="left:91px;top:22px;" width="23" height="23" viewBox="0 0 23 23"><circle cx="11.4" cy="10.9" r="10.6" fill="#fff"/><path d="M5.2 16.2C8 12.5 11.6 6.4 14.2 5.1c1.4-.7 1.6.6 1.1 2.4-.9 3.3-2.8 7.7-2.4 9.3.3 1 1.5.2 2.4-.9" stroke="#6b489d" stroke-width="1.4" fill="none" stroke-linecap="round"/><path d="M8.6 11.3c1.8-.4 3.6-.5 5.3-.3M16.6 8.4c.8.8 1 2.2.6 3.3" stroke="#6b489d" stroke-width="0.8" fill="none" stroke-linecap="round"/></svg>
<div class="r" style="left:215.0px;top:98.8px;width:11.6px;height:233.7px;background:#23262f"></div>
<svg class="r" style="left:215px;top:88px;" width="12" height="8" viewBox="0 0 12 8"><path d="M6 1.5L9.5 6H2.5z" fill="#23262f"/></svg>
<svg class="r" style="left:17px;top:103px;" width="20" height="20" viewBox="0 0 20 20"><rect x="1.1" y="1.2" width="7.8" height="7.9" rx="1.8" fill="#fff"/><rect x="10.8" y="1.2" width="7.9" height="7.9" rx="1.8" fill="rgba(255,255,255,0.33)"/><rect x="1.1" y="11.1" width="7.8" height="7.8" rx="1.8" fill="rgba(255,255,255,0.33)"/><rect x="10.8" y="11.1" width="7.9" height="7.8" rx="1.8" fill="rgba(255,255,255,0.33)"/></svg>
<div class="t" style="left:44.1px;top:104.2px;font-size:12.8px;color:#ffffff;font-weight:700;">Dashboard</div>
<div class="t" style="left:15.6px;top:162.6px;font-size:10.7px;color:#f4f0fa;font-weight:700;">CONFIGURE</div>
<div class="t" style="left:44.5px;top:200.1px;font-size:12.8px;color:#ffffff;font-weight:700;">Inventory</div>
<div class="t" style="left:44.5px;top:246.7px;font-size:12.8px;color:#ffffff;font-weight:700;">Wireless</div>
<div class="t" style="left:44.5px;top:291.9px;font-size:12.8px;color:#ffffff;font-weight:700;">LAN</div>
<div class="t" style="left:44.5px;top:331.6px;font-size:12.8px;color:#ffffff;font-weight:700;">Network Access</div>
<div class="t" style="left:15.7px;top:561.9px;font-size:10.8px;color:#f4f0fa;font-weight:700;">MONITOR</div>
<div class="t" style="left:44.0px;top:605.5px;font-size:12.8px;color:#ffffff;font-weight:700;">Network</div>
<div class="t" style="left:44.0px;top:658.9px;font-size:12.8px;color:#ffffff;font-weight:700;">Location</div>
<div class="t" style="left:44.0px;top:705.6px;font-size:12.8px;color:#ffffff;font-weight:700;">Alerts</div>
<div class="t" style="left:44.0px;top:747.5px;font-size:12.8px;color:#ffffff;font-weight:700;">Diagnostic Tools</div>
<svg class="r" style="left:15px;top:194px;" width="24" height="22" viewBox="0 0 24 22"><rect x="2" y="12" width="19.8" height="8" rx="2.4" fill="rgba(255,255,255,0.38)"/><rect x="15.8" y="2.2" width="2.2" height="9.8" rx="1" fill="#fff"/><circle cx="6.4" cy="16" r="0.9" fill="rgba(255,255,255,0.25)"/><circle cx="10.2" cy="16" r="0.9" fill="rgba(255,255,255,0.25)"/><circle cx="14" cy="16" r="0.9" fill="rgba(255,255,255,0.25)"/></svg>
<svg class="r" style="left:16px;top:243px;" width="22" height="22" viewBox="0 0 22 22"><path d="M3.8 7.4c4.2-3.2 10.4-3.2 14.6 0" stroke="#fff" stroke-width="2.3" fill="none" stroke-linecap="round"/><path d="M6.2 11.2c2.9-2.2 7-2.2 9.9 0" stroke="#fff" stroke-width="2.3" fill="none" stroke-linecap="round"/><path d="M8.7 14.9c1.5-1 3.4-1 4.9 0" stroke="#fff" stroke-width="2.3" fill="none" stroke-linecap="round"/><circle cx="11.1" cy="19.8" r="1.9" fill="#fff"/></svg>
<svg class="r" style="left:14px;top:286px;" width="26" height="22" viewBox="0 0 26 22"><rect x="9.6" y="3.5" width="6.9" height="4" rx="0.8" stroke="#fff" stroke-width="2.6" fill="none"/><path d="M13 8.8v2.6M1.8 11.45h22.6" stroke="#fff" stroke-width="2.1"/><rect x="4.2" y="14.2" width="5.5" height="5.2" rx="0.8" stroke="#fff" stroke-width="2.6" fill="none"/><rect x="16.2" y="14.2" width="5.7" height="5.2" rx="0.8" stroke="#fff" stroke-width="2.6" fill="none"/><path d="M7 12v2M19 12v2" stroke="#fff" stroke-width="2.4"/></svg>
<svg class="r" style="left:16px;top:327px;" width="22" height="22" viewBox="0 0 22 22"><rect x="4.3" y="4.9" width="13.3" height="12.7" rx="3.6" stroke="#fff" stroke-width="1.9" fill="none"/><rect x="8.4" y="2.4" width="4.9" height="4.5" rx="0.9" fill="#fff"/><rect x="8.4" y="15.3" width="4.9" height="4.4" rx="0.9" fill="#fff"/><rect x="2.2" y="8.8" width="4.5" height="4.5" rx="0.9" fill="#fff"/><rect x="15.2" y="8.8" width="4.7" height="4.5" rx="0.9" fill="#fff"/></svg>
<svg class="r" style="left:16px;top:602px;" width="22" height="22" viewBox="0 0 22 22"><path d="M5.3 12.7C8.5 11.1 11.5 6.6 13.8 4.6 15 3.8 16.8 4.5 17.9 5.6V9C16.5 8.3 14.5 8.2 12.5 9.2 10.5 10.3 8 12.6 5.3 13.4z" fill="rgba(255,255,255,0.38)"/><path d="M5.3 14.4C8 14.1 10.5 12 12.5 11 14.5 10 16.5 10 17.9 10.5V17H5.3z" fill="#fff"/><path d="M4.45 1.9v17.7M1.9 17.1h17.8" stroke="#fff" stroke-width="1.8" stroke-linecap="round"/></svg>
<svg class="r" style="left:16px;top:654px;" width="22" height="22" viewBox="0 0 22 22"><path d="M10.7 19.7C8 17 3.8 12.8 3.8 9.6a6.9 6.9 0 0 1 13.8 0c0 3.2-4.2 7.4-6.9 10.1z" fill="rgba(255,255,255,0.35)"/><circle cx="10.6" cy="10.4" r="2.7" fill="#fff"/></svg>
<svg class="r" style="left:15px;top:700px;" width="24" height="22" viewBox="0 0 24 22"><path d="M12 3.2L3 19h18z" stroke="#fff" stroke-width="1.9" fill="none" stroke-linejoin="round"/><path d="M12 9.8v5.2" stroke="#fff" stroke-width="1.8"/><circle cx="12" cy="17" r="0.9" fill="#fff"/></svg>
<svg class="r" style="left:15px;top:740px;" width="24" height="24" viewBox="0 0 24 24"><g stroke="#fff" stroke-width="1.8" fill="none" stroke-linejoin="round"><rect x="-2.4" y="-2.4" width="4.8" height="4.8" rx="0.6" transform="translate(5,4.9) rotate(45)" fill="#fff" stroke="none"/><circle cx="5" cy="4.9" r="0.9" fill="#4f6bc4" stroke="none"/><path d="M6.8 6.7L11.2 11.1"/><rect x="-4.6" y="-2.5" width="9.2" height="5" rx="2.5" transform="translate(16.6,17) rotate(45)"/><rect x="-7.2" y="-2.5" width="14.4" height="5" rx="2.5" transform="translate(8.4,15.4) rotate(-45)"/><path d="M21.3 3.2A5.1 5.1 0 1 0 21.6 9.8L18.6 8.6 17.9 5.8z" fill="#4f6bc4"/></g></svg>
<svg class="r" style="left:185px;top:201px;" width="10" height="10" viewBox="0 0 10 10"><path d="M2 1.4L5.6 4.5 2.2 7.6" stroke="rgba(45,45,60,0.72)" stroke-width="1.6" fill="none" stroke-linecap="round" stroke-linejoin="round"/></svg>
<svg class="r" style="left:184px;top:248px;" width="10" height="10" viewBox="0 0 10 10"><path d="M1.6 3.2L4.9 6.3 8.2 3.2" stroke="rgba(45,45,60,0.72)" stroke-width="1.6" fill="none" stroke-linecap="round" stroke-linejoin="round"/></svg>
<svg class="r" style="left:185px;top:293px;" width="10" height="10" viewBox="0 0 10 10"><path d="M2 1.4L5.6 4.5 2.2 7.6" stroke="rgba(45,45,60,0.72)" stroke-width="1.6" fill="none" stroke-linecap="round" stroke-linejoin="round"/></svg>
<svg class="r" style="left:184px;top:333px;" width="10" height="10" viewBox="0 0 10 10"><path d="M1.3 6.4L4.9 3 8.5 6.4" stroke="#ffffff" stroke-width="1.6" fill="none" stroke-linecap="round" stroke-linejoin="round"/></svg>
<svg class="r" style="left:185px;top:369px;" width="10" height="10" viewBox="0 0 10 10"><path d="M2 1.4L5.6 4.5 2.2 7.6" stroke="rgba(45,45,60,0.72)" stroke-width="1.6" fill="none" stroke-linecap="round" stroke-linejoin="round"/></svg>
<svg class="r" style="left:185px;top:405px;" width="10" height="10" viewBox="0 0 10 10"><path d="M2 1.4L5.6 4.5 2.2 7.6" stroke="rgba(45,45,60,0.72)" stroke-width="1.6" fill="none" stroke-linecap="round" stroke-linejoin="round"/></svg>
<svg class="r" style="left:185px;top:440px;" width="10" height="10" viewBox="0 0 10 10"><path d="M2 1.4L5.6 4.5 2.2 7.6" stroke="rgba(45,45,60,0.72)" stroke-width="1.6" fill="none" stroke-linecap="round" stroke-linejoin="round"/></svg>
<svg class="r" style="left:185px;top:511px;" width="10" height="10" viewBox="0 0 10 10"><path d="M2 1.4L5.6 4.5 2.2 7.6" stroke="rgba(45,45,60,0.72)" stroke-width="1.6" fill="none" stroke-linecap="round" stroke-linejoin="round"/></svg>
<svg class="r" style="left:184px;top:606px;" width="10" height="10" viewBox="0 0 10 10"><path d="M1.6 3.2L4.9 6.3 8.2 3.2" stroke="rgba(45,45,60,0.72)" stroke-width="1.6" fill="none" stroke-linecap="round" stroke-linejoin="round"/></svg>
<svg class="r" style="left:185px;top:659px;" width="10" height="10" viewBox="0 0 10 10"><path d="M2 1.4L5.6 4.5 2.2 7.6" stroke="rgba(45,45,60,0.72)" stroke-width="1.6" fill="none" stroke-linecap="round" stroke-linejoin="round"/></svg>
<svg class="r" style="left:185px;top:748px;" width="10" height="10" viewBox="0 0 10 10"><path d="M2 1.4L5.6 4.5 2.2 7.6" stroke="rgba(45,45,60,0.72)" stroke-width="1.6" fill="none" stroke-linecap="round" stroke-linejoin="round"/></svg>
<div class="r" style="left:32.3px;top:372.3px;width:3.4px;height:3.4px;border-radius:50%;background:#fff"></div>
<div class="t" style="left:47.4px;top:367.6px;font-size:12.3px;color:#eeeaf6;font-weight:400;-webkit-text-stroke:0.25px #eeeaf6">Unified Access</div>
<div class="r" style="left:32.3px;top:408.5px;width:3.4px;height:3.4px;border-radius:50%;background:#fff"></div>
<div class="t" style="left:47.4px;top:403.8px;font-size:12.3px;color:#eeeaf6;font-weight:400;-webkit-text-stroke:0.25px #eeeaf6">Auth Servers</div>
<div class="r" style="left:32.3px;top:443.9px;width:3.4px;height:3.4px;border-radius:50%;background:#fff"></div>
<div class="t" style="left:47.4px;top:439.2px;font-size:12.3px;color:#eeeaf6;font-weight:400;-webkit-text-stroke:0.25px #eeeaf6">Groups</div>
<div class="r" style="left:32.3px;top:479.4px;width:3.4px;height:3.4px;border-radius:50%;background:#fff"></div>
<div class="t" style="left:47.4px;top:474.7px;font-size:12.3px;color:#eeeaf6;font-weight:400;-webkit-text-stroke:0.25px #eeeaf6">UPAM - NAC</div>
<div class="r" style="left:32.3px;top:514.5px;width:3.4px;height:3.4px;border-radius:50%;background:#fff"></div>
<div class="t" style="left:47.4px;top:509.8px;font-size:12.3px;color:#eeeaf6;font-weight:400;-webkit-text-stroke:0.25px #eeeaf6">Accounts</div>
<div class="r" style="left:15.9px;top:459.6px;width:123.1px;height:43.8px;border:5px solid #cc0000;box-sizing:border-box"></div>
<svg class="r" style="left:139px;top:470px;" width="62" height="24" viewBox="0 0 62 24"><path d="M0 11.6h40" stroke="#f50000" stroke-width="3.4"/><path d="M38 3.2L61 11.4 38 19.6z" fill="#f50000"/></svg>
<div class="r" style="left:204.2px;top:332.5px;width:176.8px;height:441px;border-radius:0 7px 0 0;background:linear-gradient(180deg,#6b489d 0px,#6b489d 121px,#5267c2 441px);box-shadow:6px 0 24px rgba(30,30,60,0.10);z-index:5"></div>
<div class="r" style="left:227.4px;top:359.5px;width:3.6px;height:3.6px;border-radius:50%;background:#fff;z-index:6"></div>
<div class="t" style="left:242.2px;top:355.8px;font-size:12px;color:#f3f0f9;font-weight:400;z-index:6;-webkit-text-stroke:0.25px #f3f0f9">Access Policies</div>
<div class="r" style="left:227.4px;top:404.0px;width:3.6px;height:3.6px;border-radius:50%;background:#fff;z-index:6"></div>
<div class="t" style="left:242.2px;top:391.8px;font-size:12px;color:#f3f0f9;font-weight:400;z-index:6;-webkit-text-stroke:0.25px #f3f0f9">Guest Access</div>
<div class="t" style="left:242.2px;top:409.4px;font-size:12px;color:#f3f0f9;font-weight:400;z-index:6;-webkit-text-stroke:0.25px #f3f0f9">Strategy</div>
<div class="r" style="left:227.4px;top:456.7px;width:3.6px;height:3.6px;border-radius:50%;background:#fff;z-index:6"></div>
<div class="t" style="left:242.2px;top:444.1px;font-size:12px;color:#f3f0f9;font-weight:400;z-index:6;-webkit-text-stroke:0.25px #f3f0f9">BYOD Access</div>
<div class="t" style="left:242.2px;top:461.7px;font-size:12px;color:#f3f0f9;font-weight:400;z-index:6;-webkit-text-stroke:0.25px #f3f0f9">Strategy</div>
<div class="r" style="left:227.4px;top:501.2px;width:3.6px;height:3.6px;border-radius:50%;background:#fff;z-index:6"></div>
<div class="t" style="left:242.2px;top:497.4px;font-size:12px;color:#f3f0f9;font-weight:400;z-index:6;-webkit-text-stroke:0.25px #f3f0f9">NAS Clients</div>
<div class="r" style="left:227.4px;top:545.8px;width:3.6px;height:3.6px;border-radius:50%;background:#fff;z-index:6"></div>
<div class="t" style="left:242.2px;top:532.5px;font-size:12px;color:#f3f0f9;font-weight:400;z-index:6;-webkit-text-stroke:0.25px #f3f0f9">Role Mapping for On-</div>
<div class="t" style="left:242.2px;top:550.1px;font-size:12px;color:#f3f0f9;font-weight:400;z-index:6;-webkit-text-stroke:0.25px #f3f0f9">premises LDAP</div>
<div class="r" style="left:227.4px;top:598.7px;width:3.6px;height:3.6px;border-radius:50%;background:#fff;z-index:6"></div>
<div class="t" style="left:242.2px;top:585.5px;font-size:12px;color:#f3f0f9;font-weight:400;z-index:6;-webkit-text-stroke:0.25px #f3f0f9">Captive Portal</div>
<div class="t" style="left:242.2px;top:603.1px;font-size:12px;color:#f3f0f9;font-weight:400;z-index:6;-webkit-text-stroke:0.25px #f3f0f9">Templates</div>
<div class="r" style="left:227.4px;top:642.5px;width:3.6px;height:3.6px;border-radius:50%;background:#fff;z-index:6"></div>
<div class="t" style="left:242.2px;top:638.8px;font-size:12px;color:#f3f0f9;font-weight:400;z-index:6;-webkit-text-stroke:0.25px #f3f0f9">Certificates</div>
<div class="r" style="left:227.4px;top:678.0px;width:3.6px;height:3.6px;border-radius:50%;background:#fff;z-index:6"></div>
<div class="t" style="left:242.2px;top:674.1px;font-size:12px;color:#f3f0f9;font-weight:400;z-index:6;-webkit-text-stroke:0.25px #f3f0f9">Additional Trust CA</div>
<div class="r" style="left:227.4px;top:713.5px;width:3.6px;height:3.6px;border-radius:50%;background:#fff;z-index:6"></div>
<div class="t" style="left:242.2px;top:709.4px;font-size:12px;color:#f3f0f9;font-weight:400;z-index:6;-webkit-text-stroke:0.25px #f3f0f9">External Source</div>
<div class="r" style="left:217.8px;top:739.0px;width:143.2px;height:28.0px;background:#4557a8;outline:1px solid #3f6cc2;z-index:6"></div>
<div class="r" style="left:212.8px;top:734.0px;width:153.2px;height:38.0px;border:5px solid #cc0000;box-sizing:border-box;z-index:7"></div>
<div class="r" style="left:227.4px;top:749.1px;width:3.6px;height:3.6px;border-radius:50%;background:#fff;z-index:8"></div>
<div class="t" style="left:241.8px;top:745.2px;font-size:12px;color:#ffffff;font-weight:400;text-decoration:underline;text-underline-offset:2px;z-index:8">Email &amp; SMS</div>
</body></html>
